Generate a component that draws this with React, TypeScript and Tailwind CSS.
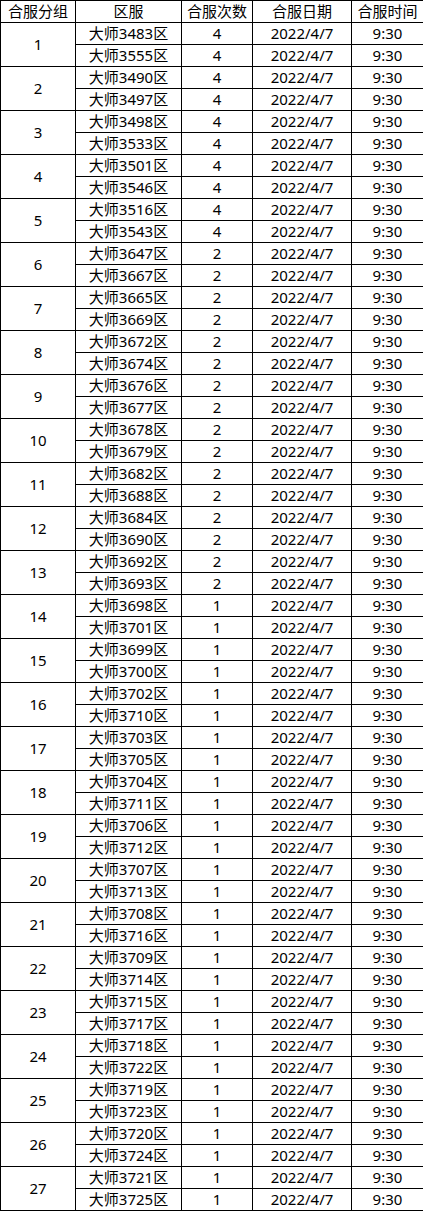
import React from 'react';

type Group = { id: number; servers: [number, number]; times: number };

const groups: Group[] = [
  { id: 1, servers: [3483, 3555], times: 4 },
  { id: 2, servers: [3490, 3497], times: 4 },
  { id: 3, servers: [3498, 3533], times: 4 },
  { id: 4, servers: [3501, 3546], times: 4 },
  { id: 5, servers: [3516, 3543], times: 4 },
  { id: 6, servers: [3647, 3667], times: 2 },
  { id: 7, servers: [3665, 3669], times: 2 },
  { id: 8, servers: [3672, 3674], times: 2 },
  { id: 9, servers: [3676, 3677], times: 2 },
  { id: 10, servers: [3678, 3679], times: 2 },
  { id: 11, servers: [3682, 3688], times: 2 },
  { id: 12, servers: [3684, 3690], times: 2 },
  { id: 13, servers: [3692, 3693], times: 2 },
  { id: 14, servers: [3698, 3701], times: 1 },
  { id: 15, servers: [3699, 3700], times: 1 },
  { id: 16, servers: [3702, 3710], times: 1 },
  { id: 17, servers: [3703, 3705], times: 1 },
  { id: 18, servers: [3704, 3711], times: 1 },
  { id: 19, servers: [3706, 3712], times: 1 },
  { id: 20, servers: [3707, 3713], times: 1 },
  { id: 21, servers: [3708, 3716], times: 1 },
  { id: 22, servers: [3709, 3714], times: 1 },
  { id: 23, servers: [3715, 3717], times: 1 },
  { id: 24, servers: [3718, 3722], times: 1 },
  { id: 25, servers: [3719, 3723], times: 1 },
  { id: 26, servers: [3720, 3724], times: 1 },
  { id: 27, servers: [3721, 3725], times: 1 },
];

const cell = 'border border-black p-0 text-center align-middle leading-none';

export default function App() {
  return (
    <div className="bg-white w-[423px] h-[1211px] font-['Noto_Sans','Noto_Sans_CJK_SC',sans-serif] text-[15px] text-black">
      <table className="table-fixed border-collapse w-[423px]">
        <colgroup>
          <col className="w-[75px]" />
          <col className="w-[106px]" />
          <col className="w-[71px]" />
          <col className="w-[99px]" />
          <col className="w-[72px]" />
        </colgroup>
        <thead>
          <tr className="h-[22px]">
            <th className={`${cell} font-normal`}>合服分组</th>
            <th className={`${cell} font-normal`}>区服</th>
            <th className={`${cell} font-normal`}>合服次数</th>
            <th className={`${cell} font-normal`}>合服日期</th>
            <th className={`${cell} font-normal`}>合服时间</th>
          </tr>
        </thead>
        <tbody>
          {groups.map((g) => (
            <React.Fragment key={g.id}>
              <tr className="h-[22px]">
                <td rowSpan={2} className={cell}>{g.id}</td>
                <td className={cell}>大师{g.servers[0]}区</td>
                <td className={cell}>{g.times}</td>
                <td className={cell}>2022/4/7</td>
                <td className={cell}>9:30</td>
              </tr>
              <tr className="h-[22px]">
                <td className={cell}>大师{g.servers[1]}区</td>
                <td className={cell}>{g.times}</td>
                <td className={cell}>2022/4/7</td>
                <td className={cell}>9:30</td>
              </tr>
            </React.Fragment>
          ))}
        </tbody>
      </table>
    </div>
  );
}
